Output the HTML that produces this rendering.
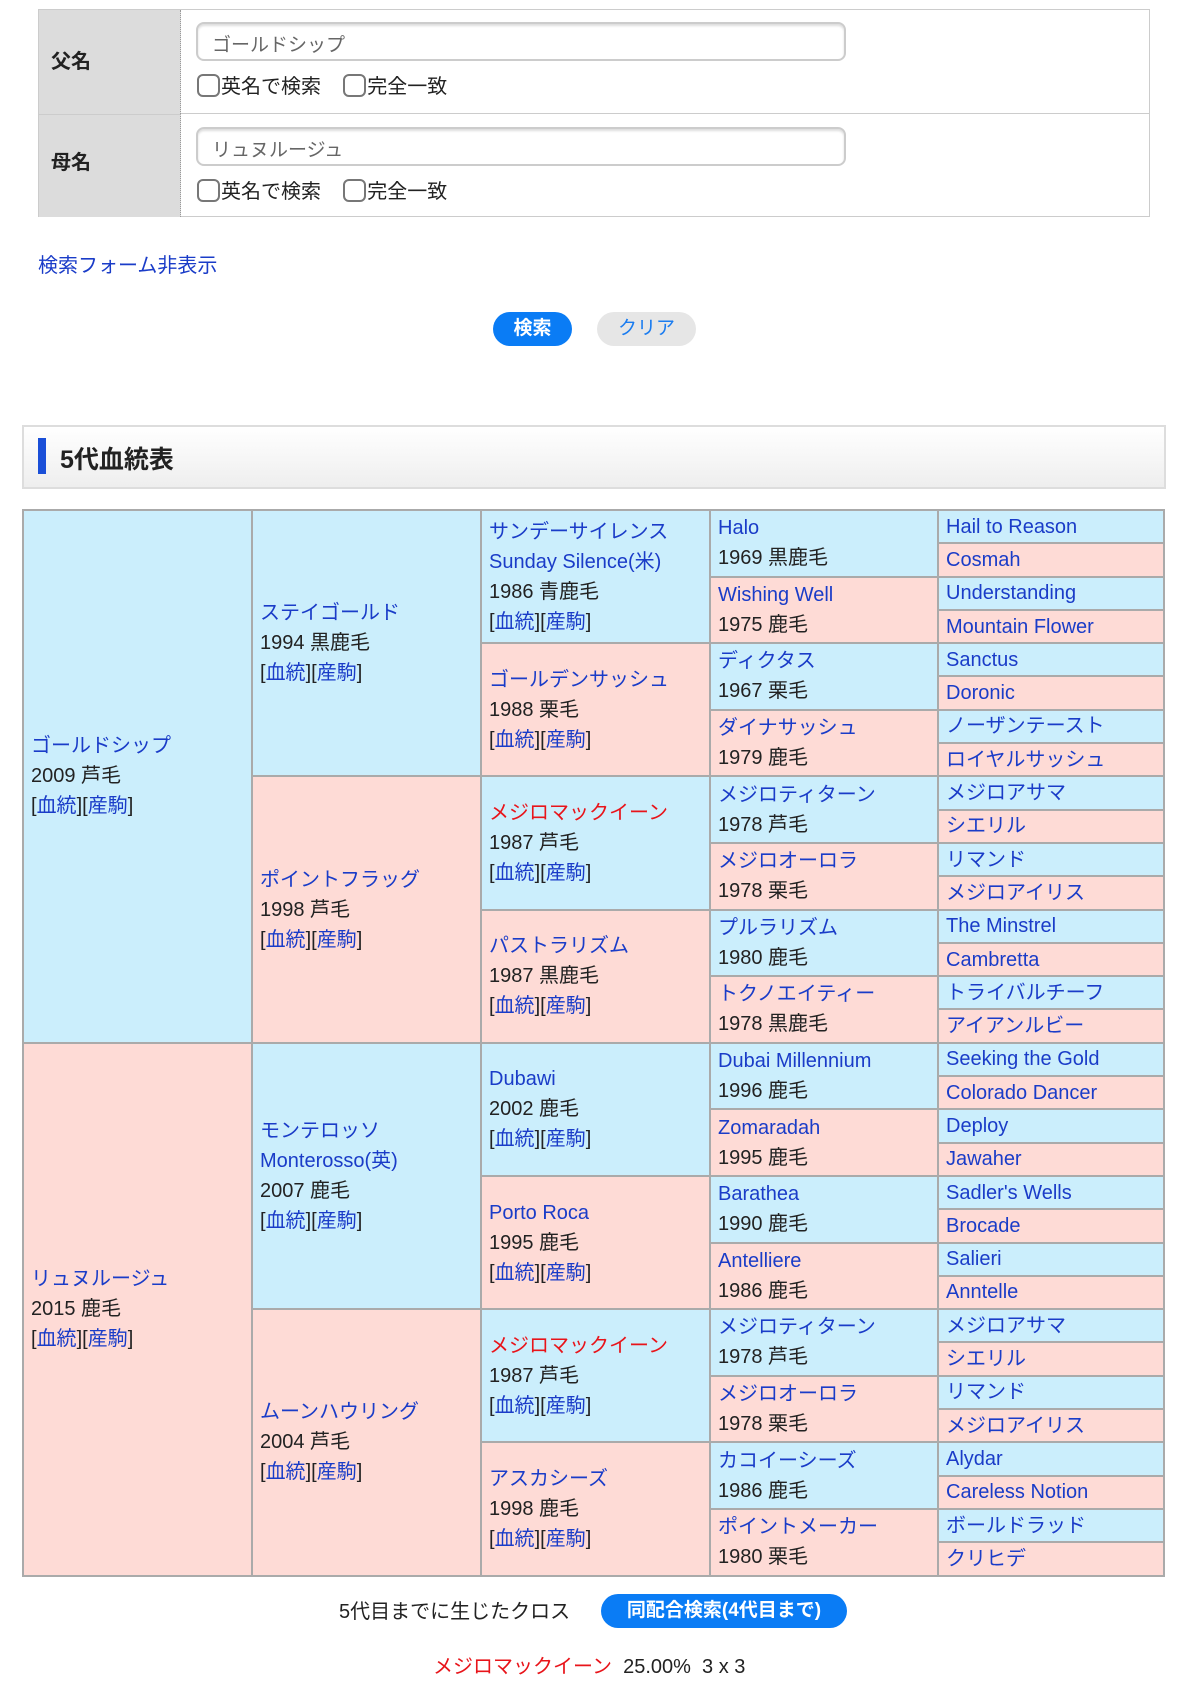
<!DOCTYPE html>
<html><head><meta charset="utf-8"><style>
*{box-sizing:border-box}
body{margin:0;width:1179px;height:1693px;background:#fff;font-family:"Liberation Sans","Noto Sans CJK JP",sans-serif;color:#222;position:relative;overflow:hidden}
a{color:#1a3cc8;text-decoration:none}
.abs{position:absolute}
.form{position:absolute;left:38px;top:9px;width:1112px;height:208px;border:1px solid #ccc}
.lab{position:absolute;left:0;width:142px;background:#dcdcdc;font-weight:bold;font-size:20px;padding-left:12px;border-right:1px dotted #999}
.inp{position:absolute;left:157px;width:650px;height:39px;border:2px solid #ccc;border-radius:8px;font-size:19px;color:#666;padding:6px 14px;box-shadow:inset 0 2px 2px #ddd}
.cb{position:absolute;font-size:20px;color:#222}
.cb span{display:inline-block;width:23px;height:23px;border:2px solid #777;border-radius:6px;vertical-align:-4px;margin-right:1px}
.btn{position:absolute;border-radius:17px;font-size:19px;text-align:center}
table{position:absolute;left:22px;top:509px;width:1141px;border-collapse:collapse;table-layout:fixed}
td{border:2px solid #aaa;padding:0 7px;font-size:20px;line-height:30px;vertical-align:middle;height:33.3px;white-space:nowrap;overflow:hidden}
.b{background:#cbeefc}.p{background:#fedbd6}
.r{color:#e8141a}
</style></head><body>
<div class="form">
 <div class="lab" style="top:0;height:104px;line-height:104px">父名</div>
 <div class="lab" style="top:104px;height:103px;line-height:96px;border-top:1px solid #ccc">母名</div>
 <div style="position:absolute;left:142px;right:0;top:103px;border-top:1px solid #ccc"></div>
 <div class="inp" style="top:12px">ゴールドシップ</div>
 <div class="cb" style="left:158px;top:60px"><span></span>英名で検索 &nbsp;&nbsp;&nbsp;<span></span>完全一致</div>
 <div class="inp" style="top:117px">リュヌルージュ</div>
 <div class="cb" style="left:158px;top:165px"><span></span>英名で検索 &nbsp;&nbsp;&nbsp;<span></span>完全一致</div>
</div>
<a class="abs" style="left:38px;top:249px;font-size:20px">検索フォーム非表示</a>
<div class="btn" style="left:493px;top:312px;width:79px;height:34px;line-height:34px;background:#0a7cf5;color:#fff;font-weight:bold">検索</div>
<div class="btn" style="left:597px;top:312px;width:99px;height:34px;line-height:34px;background:#e6e6e6;color:#1a7cf0">クリア</div>
<div class="abs" style="left:22px;top:425px;width:1144px;height:64px;border:2px solid #ddd;background:linear-gradient(#fff,#eee)"></div>
<div class="abs" style="left:38px;top:438px;width:8px;height:36px;background:#1a4fd8"></div>
<div class="abs" style="left:60px;top:440px;font-size:25px;font-weight:bold;color:#222">5代血統表</div>
<table>
<colgroup><col style="width:229px"><col style="width:229px"><col style="width:229px"><col style="width:228px"><col style="width:226px"></colgroup>
<tr><td class="b" rowspan="16"><a>ゴールドシップ</a><br>2009 芦毛<br>[<a>血統</a>][<a>産駒</a>]</td><td class="b" rowspan="8"><a>ステイゴールド</a><br>1994 黒鹿毛<br>[<a>血統</a>][<a>産駒</a>]</td><td class="b" rowspan="4"><a>サンデーサイレンス</a><br><a>Sunday Silence(米)</a><br>1986 青鹿毛<br>[<a>血統</a>][<a>産駒</a>]</td><td class="b" rowspan="2"><a>Halo</a><br>1969 黒鹿毛</td><td class="b"><a>Hail to Reason</a></td></tr>
<tr><td class="p"><a>Cosmah</a></td></tr>
<tr><td class="p" rowspan="2"><a>Wishing Well</a><br>1975 鹿毛</td><td class="b"><a>Understanding</a></td></tr>
<tr><td class="p"><a>Mountain Flower</a></td></tr>
<tr><td class="p" rowspan="4"><a>ゴールデンサッシュ</a><br>1988 栗毛<br>[<a>血統</a>][<a>産駒</a>]</td><td class="b" rowspan="2"><a>ディクタス</a><br>1967 栗毛</td><td class="b"><a>Sanctus</a></td></tr>
<tr><td class="p"><a>Doronic</a></td></tr>
<tr><td class="p" rowspan="2"><a>ダイナサッシュ</a><br>1979 鹿毛</td><td class="b"><a>ノーザンテースト</a></td></tr>
<tr><td class="p"><a>ロイヤルサッシュ</a></td></tr>
<tr><td class="p" rowspan="8"><a>ポイントフラッグ</a><br>1998 芦毛<br>[<a>血統</a>][<a>産駒</a>]</td><td class="b" rowspan="4"><a class="r">メジロマックイーン</a><br>1987 芦毛<br>[<a>血統</a>][<a>産駒</a>]</td><td class="b" rowspan="2"><a>メジロティターン</a><br>1978 芦毛</td><td class="b"><a>メジロアサマ</a></td></tr>
<tr><td class="p"><a>シエリル</a></td></tr>
<tr><td class="p" rowspan="2"><a>メジロオーロラ</a><br>1978 栗毛</td><td class="b"><a>リマンド</a></td></tr>
<tr><td class="p"><a>メジロアイリス</a></td></tr>
<tr><td class="p" rowspan="4"><a>パストラリズム</a><br>1987 黒鹿毛<br>[<a>血統</a>][<a>産駒</a>]</td><td class="b" rowspan="2"><a>プルラリズム</a><br>1980 鹿毛</td><td class="b"><a>The Minstrel</a></td></tr>
<tr><td class="p"><a>Cambretta</a></td></tr>
<tr><td class="p" rowspan="2"><a>トクノエイティー</a><br>1978 黒鹿毛</td><td class="b"><a>トライバルチーフ</a></td></tr>
<tr><td class="p"><a>アイアンルビー</a></td></tr>
<tr><td class="p" rowspan="16"><a>リュヌルージュ</a><br>2015 鹿毛<br>[<a>血統</a>][<a>産駒</a>]</td><td class="b" rowspan="8"><a>モンテロッソ</a><br><a>Monterosso(英)</a><br>2007 鹿毛<br>[<a>血統</a>][<a>産駒</a>]</td><td class="b" rowspan="4"><a>Dubawi</a><br>2002 鹿毛<br>[<a>血統</a>][<a>産駒</a>]</td><td class="b" rowspan="2"><a>Dubai Millennium</a><br>1996 鹿毛</td><td class="b"><a>Seeking the Gold</a></td></tr>
<tr><td class="p"><a>Colorado Dancer</a></td></tr>
<tr><td class="p" rowspan="2"><a>Zomaradah</a><br>1995 鹿毛</td><td class="b"><a>Deploy</a></td></tr>
<tr><td class="p"><a>Jawaher</a></td></tr>
<tr><td class="p" rowspan="4"><a>Porto Roca</a><br>1995 鹿毛<br>[<a>血統</a>][<a>産駒</a>]</td><td class="b" rowspan="2"><a>Barathea</a><br>1990 鹿毛</td><td class="b"><a>Sadler's Wells</a></td></tr>
<tr><td class="p"><a>Brocade</a></td></tr>
<tr><td class="p" rowspan="2"><a>Antelliere</a><br>1986 鹿毛</td><td class="b"><a>Salieri</a></td></tr>
<tr><td class="p"><a>Anntelle</a></td></tr>
<tr><td class="p" rowspan="8"><a>ムーンハウリング</a><br>2004 芦毛<br>[<a>血統</a>][<a>産駒</a>]</td><td class="b" rowspan="4"><a class="r">メジロマックイーン</a><br>1987 芦毛<br>[<a>血統</a>][<a>産駒</a>]</td><td class="b" rowspan="2"><a>メジロティターン</a><br>1978 芦毛</td><td class="b"><a>メジロアサマ</a></td></tr>
<tr><td class="p"><a>シエリル</a></td></tr>
<tr><td class="p" rowspan="2"><a>メジロオーロラ</a><br>1978 栗毛</td><td class="b"><a>リマンド</a></td></tr>
<tr><td class="p"><a>メジロアイリス</a></td></tr>
<tr><td class="p" rowspan="4"><a>アスカシーズ</a><br>1998 鹿毛<br>[<a>血統</a>][<a>産駒</a>]</td><td class="b" rowspan="2"><a>カコイーシーズ</a><br>1986 鹿毛</td><td class="b"><a>Alydar</a></td></tr>
<tr><td class="p"><a>Careless Notion</a></td></tr>
<tr><td class="p" rowspan="2"><a>ポイントメーカー</a><br>1980 栗毛</td><td class="b"><a>ボールドラッド</a></td></tr>
<tr><td class="p"><a>クリヒデ</a></td></tr>
</table>
<div class="abs" style="left:339px;top:1595px;font-size:20px">5代目までに生じたクロス</div>
<div class="btn" style="left:601px;top:1594px;width:246px;height:34px;line-height:34px;background:#0a7cf5;color:#fff;font-weight:bold;font-size:19px">同配合検索(4代目まで)</div>
<div class="abs" style="left:433px;top:1650px;font-size:20px"><span class="r">メジロマックイーン</span>&nbsp;&nbsp;25.00%&nbsp;&nbsp;3 x 3</div>
</body></html>
